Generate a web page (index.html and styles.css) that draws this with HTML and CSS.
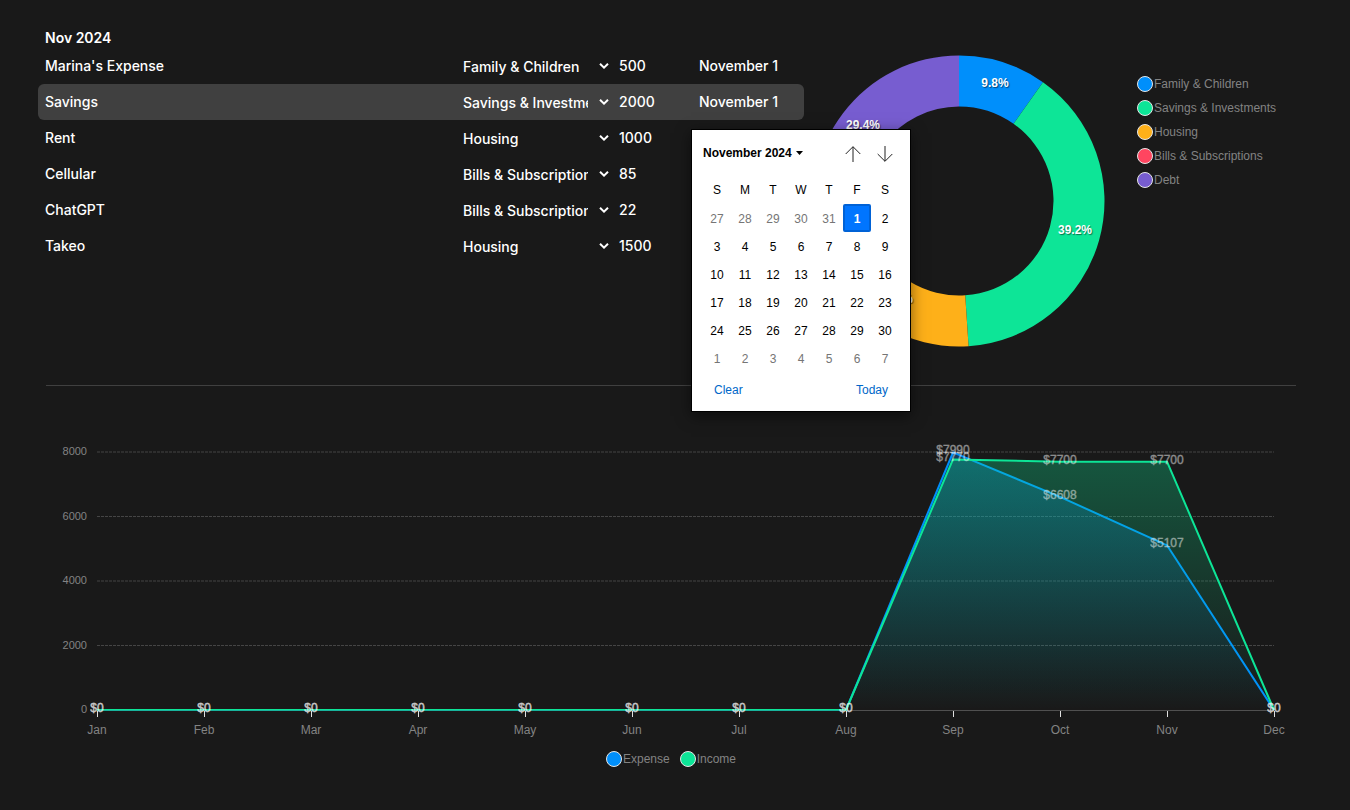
FILE: index.html
```html
<!DOCTYPE html>
<html lang="en">
<head>
<meta charset="utf-8">
<meta name="viewport" content="width=device-width, initial-scale=1">
<title>Expenses</title>
<link rel="stylesheet" href="styles.css">
</head>
<body>
<main class="page">
  <section class="overview">
    <div class="expenses">
      <h2 class="month">Nov 2024</h2>
      <table class="expense-table">
        <colgroup><col><col class="col-category"><col class="col-amount"><col class="col-date"></colgroup>
        <tbody id="rows"></tbody>
      </table>
    </div>

    <div class="breakdown">
      <svg class="donut" viewBox="-146 -146 292 292" role="img" aria-label="Expenses by category" id="donut"></svg>
      <ul class="legend legend-column">
        <li><span class="dot blue"></span>Family &amp; Children</li>
        <li><span class="dot green"></span>Savings &amp; Investments</li>
        <li><span class="dot orange"></span>Housing</li>
        <li><span class="dot red"></span>Bills &amp; Subscriptions</li>
        <li><span class="dot purple"></span>Debt</li>
      </ul>
    </div>
  </section>

  <hr class="divider">

  <section class="trend">
    <svg class="trend-chart" viewBox="0 0 1250 308" role="img" aria-label="Expense and income by month" id="trend"></svg>
    <ul class="legend legend-row">
      <li><span class="dot blue"></span>Expense</li>
      <li><span class="dot green"></span>Income</li>
    </ul>
  </section>
</main>

<template id="calendar-template">
  <div class="calendar" role="dialog" aria-label="Choose date">
    <div class="calendar-head">
      <button class="calendar-title" type="button">November 2024
        <svg width="7" height="4" viewBox="0 0 7 4" aria-hidden="true"><path d="M0 0h7L3.5 4z"/></svg>
      </button>
      <div class="calendar-nav">
        <button type="button" aria-label="Previous month"><svg width="16" height="16" viewBox="0 0 16 16"><path d="M8 16V.8M.7 8 8 .7 15.3 8"/></svg></button>
        <button type="button" aria-label="Next month"><svg width="16" height="16" viewBox="0 0 16 16"><path d="M8 0v15.2M.7 8 8 15.3 15.3 8"/></svg></button>
      </div>
    </div>
    <table class="calendar-grid">
      <thead><tr><th>S</th><th>M</th><th>T</th><th>W</th><th>T</th><th>F</th><th>S</th></tr></thead>
      <tbody></tbody>
    </table>
    <div class="calendar-foot">
      <button type="button">Clear</button>
      <button type="button">Today</button>
    </div>
  </div>
</template>
<script src="app.js"></script>
</body>
</html>
```

FILE: styles.css
```css
* { box-sizing: border-box; }

body {
  margin: 0;
  background: #191919;
  color: #fff;
  font-family: Inter, "Liberation Sans", sans-serif;
  font-size: 14px;
}

button, input, select {
  margin: 0;
  padding: 0;
  border: 0;
  border-radius: 0;
  background: none;
  color: inherit;
  font: inherit;
}

button { cursor: pointer; }

.page { padding: 28px 46px 40px 38px; }

.overview {
  display: flex;
  align-items: flex-start;
  gap: 9px;
  padding-bottom: 38px;
}

.expenses { flex: 1; min-width: 0; }

.month {
  margin: 0;
  padding-left: 7px;
  font-size: 14px;
  font-weight: 600;
  line-height: 20px;
}

.expense-table {
  width: 100%;
  table-layout: fixed;
  border-spacing: 0;
  font-weight: 500;
}

.col-category { width: 156px; }
.col-amount { width: 80px; }
.col-date { width: 113px; }

.expense-table > tbody > tr > td { height: 36px; padding: 0 0 0 8px; }
.expense-table > tbody > tr > td:first-child { padding-left: 7px; border-radius: 6px 0 0 6px; }
.expense-table > tbody > tr > td:last-child { border-radius: 0 6px 6px 0; position: relative; }
.expense-table > tbody > tr.active > td { background: #404040; }

.field {
  display: block;
  width: 100%;
  height: 36px;
  padding-bottom: 2px;
  outline: none;
}

.picker { display: grid; align-items: center; }
.picker > * { grid-area: 1 / 1; }
.picker select {
  appearance: none;
  width: 100%;
  height: 36px;
  padding-right: 23px;
  outline: none;
}
.picker svg {
  justify-self: end;
  margin-right: 2px;
  fill: none;
  stroke: #fff;
  stroke-width: 2;
  pointer-events: none;
}

.breakdown {
  display: flex;
  flex: 0 0 491px;
  align-items: flex-start;
  gap: 32px;
  padding-top: 27px;
}

.donut { flex: 0 0 292px; height: 292px; }
.donut text {
  fill: #fff;
  font: bold 12px "Liberation Sans", sans-serif;
  text-anchor: middle;
  text-shadow: 1px 1px 1px rgba(0, 0, 0, .5);
}

.legend {
  display: flex;
  margin: 0;
  padding: 0;
  list-style: none;
  color: #838383;
  font: 12px/24px "Liberation Sans", sans-serif;
}
.legend li { display: flex; align-items: center; gap: 1px; white-space: nowrap; }
.legend-column { flex-direction: column; padding-top: 17px; }
.legend-row { justify-content: center; gap: 10px; padding-top: 7px; }

.dot {
  width: 16px;
  height: 16px;
  border: 1px solid #e6e6e6;
  border-radius: 50%;
}
.blue { background: #008ffb; }
.green { background: #0de597; }
.orange { background: #feb019; }
.red { background: #ff4560; }
.purple { background: #775dd0; }

.divider {
  height: 1px;
  margin: 0 8px;
  border: 0;
  background: #404040;
}

.trend { padding: 46px 8px 0; }
.trend-chart { display: block; width: 100%; overflow: visible; }
.trend-chart text { font: 12px "Liberation Sans", sans-serif; text-anchor: middle; }
.trend-chart .month-label { fill: #838383; }
.trend-chart .value-label { fill: #838383; font-size: 11px; text-anchor: end; }
.trend-chart .data-label { fill: #fff; stroke: #fff; stroke-width: .3px; opacity: .5; }
.grid-line { stroke: #454545; stroke-dasharray: 3 1; }
.axis { stroke: #505050; }
.tick { stroke: #e0e0e0; }
.line { fill: none; stroke-width: 2; stroke-linejoin: round; }
.line-expense { stroke: #008ffb; }
.line-income { stroke: #0de597; }
.line-flat { stroke: #18b29c; }

.calendar {
  position: absolute;
  z-index: 10;
  top: 45px;
  left: 0;
  width: 220px;
  padding: 7px 11px 6px;
  border: 1px solid #000;
  background: #fff;
  color: #000;
  font: 12px "Liberation Sans", sans-serif;
  box-shadow: 0 4px 14px rgba(0, 0, 0, .5);
}

.calendar-head { display: flex; align-items: center; justify-content: space-between; height: 32px; margin-bottom: 7px; }
.calendar-title { display: flex; align-items: center; gap: 4px; font-weight: bold; white-space: nowrap; }
.calendar-nav { display: flex; gap: 16px; padding: 1px 6px 0 0; }
.calendar-nav button { display: flex; }
.calendar-nav svg { fill: none; stroke: #222; stroke-width: 1; }

.calendar-grid { width: 100%; table-layout: fixed; border-spacing: 0; }
.calendar-grid th, .calendar-grid td { height: 28px; padding: 0; text-align: center; font-weight: normal; }
.calendar-grid button { display: block; width: 28px; height: 28px; padding-top: 2px; }
.calendar-grid .outside { color: #757575; }
.calendar-grid .selected {
  padding: 1px 0 0;
  border: 2px solid #0062d6;
  border-radius: 2px;
  background: #0075ff;
  color: #fff;
  font-weight: bold;
}

.calendar-foot { display: flex; justify-content: space-between; padding: 4px 11px 1px; }
.calendar-foot button { height: 28px; color: #0067c9; }
```

FILE: app.js
```js
const expenses = [
  ["Marina's Expense", "Family & Children", 500],
  ["Savings", "Savings & Investments", 2000],
  ["Rent", "Housing", 1000],
  ["Cellular", "Bills & Subscriptions", 85],
  ["ChatGPT", "Bills & Subscriptions", 22],
  ["Takeo", "Housing", 1500]
];
const categories = ["Family & Children", "Savings & Investments", "Housing", "Bills & Subscriptions", "Debt"];
const esc = s => s.replace(/&/g, "&amp;").replace(/'/g, "&#39;");

document.getElementById("rows").innerHTML = expenses.map(([name, category, amount], i) => `
  <tr class="${i === 1 ? "active" : ""}">
    <td><input class="field" type="text" aria-label="Name" value="${esc(name)}"></td>
    <td><div class="picker">
      <select aria-label="Category">${categories.map(c => `<option${c === category ? " selected" : ""}>${esc(c)}</option>`).join("")}</select>
      <svg width="10" height="6" viewBox="0 0 10 6" aria-hidden="true"><path d="M1 .8 5 4.6 9 .8"/></svg>
    </div></td>
    <td><input class="field" type="text" inputmode="numeric" aria-label="Amount" value="${amount}"></td>
    <td>${i < 2 ? `<input class="field" type="text" aria-label="Date" value="November 1">` : ""}</td>
  </tr>`).join("");

// Date picker, opened from the active row
const calendar = document.getElementById("calendar-template").content.cloneNode(true);
const first = new Date(2024, 9, 27);
let weeks = "";
for (let w = 0; w < 6; w++) {
  weeks += "<tr>";
  for (let d = 0; d < 7; d++) {
    const day = new Date(first.getFullYear(), first.getMonth(), first.getDate() + w * 7 + d);
    const inside = day.getMonth() === 10;
    const state = !inside ? "outside" : day.getDate() === 1 ? "selected" : "";
    weeks += `<td><button type="button" class="${state}">${day.getDate()}</button></td>`;
  }
  weeks += "</tr>";
}
calendar.querySelector("tbody").innerHTML = weeks;
document.querySelector(".active td:last-child").append(calendar);

// Donut
const slices = [[500, "#008ffb"], [2000, "#0de597"], [1000, "#feb019"], [107, "#ff4560"], [1500, "#775dd0"]];
const total = slices.reduce((sum, s) => sum + s[0], 0);
const point = (r, a) => `${(r * Math.sin(a)).toFixed(2)} ${(-r * Math.cos(a)).toFixed(2)}`;
let angle = 0, arcs = "", labels = "";
for (const [value, color] of slices) {
  const end = angle + value / total * 2 * Math.PI;
  arcs += `<path fill="${color}" d="M${point(145.5, angle)}A145.5 145.5 0 0 1 ${point(145.5, end)}L${point(94.5, end)}A94.5 94.5 0 0 0 ${point(94.5, angle)}Z"/>`;
  const mid = (angle + end) / 2;
  if (value / total > .05) {
    labels += `<text x="${Math.round(120 * Math.sin(mid))}" y="${Math.round(-120 * Math.cos(mid))}">${(value / total * 100).toFixed(1)}%</text>`;
  }
  angle = end;
}
document.getElementById("donut").innerHTML = arcs + labels;

// Monthly trend
const months = ["Jan", "Feb", "Mar", "Apr", "May", "Jun", "Jul", "Aug", "Sep", "Oct", "Nov", "Dec"];
const expense = [0, 0, 0, 0, 0, 0, 0, 0, 7990, 6608, 5107, 0];
const income = [0, 0, 0, 0, 0, 0, 0, 0, 7770, 7700, 7700, 0];
const x = i => 51 + i * 107;
const y = v => 278 - v / 8000 * 258;
const path = data => "M" + data.map((v, i) => `${x(i)} ${y(v).toFixed(1)}`).join("L");
const gradient = (id, color) => `<linearGradient id="${id}" x1="0" y1="0" x2="0" y2="1"><stop stop-color="${color}" stop-opacity=".3"/><stop offset="1" stop-color="${color}" stop-opacity="0"/></linearGradient>`;
let svg = `<defs>${gradient("fill-expense", "#008ffb")}${gradient("fill-income", "#0de597")}</defs>`;
for (const v of [0, 2000, 4000, 6000, 8000]) {
  if (v) svg += `<line class="grid-line" x1="51" x2="1228" y1="${y(v)}" y2="${y(v)}"/>`;
  svg += `<text class="value-label" x="41" y="${Math.round(y(v) + 3)}">${v}</text>`;
}
svg += `<line class="axis" x1="51" x2="1228" y1="278.5" y2="278.5"/>`;
for (const [id, data] of [["expense", expense], ["income", income]]) {
  svg += `<path fill="url(#fill-${id})" d="${path(data)}Z"/><path class="line line-${id}" d="${path(data)}"/>`;
}
// Both series lie on the baseline until August
svg += `<line class="line-flat" x1="51" x2="800" y1="278.5" y2="278.5"/>`;
months.forEach((m, i) => {
  svg += `<line class="tick" x1="${x(i) + .5}" x2="${x(i) + .5}" y1="279" y2="285"/><text class="month-label" x="${x(i)}" y="302">${m}</text>`;
});
for (const data of [expense, income]) {
  data.forEach((v, i) => { svg += `<text class="data-label" x="${x(i)}" y="${Math.round(y(v) + 2)}">$${v}</text>`; });
}
document.getElementById("trend").innerHTML = svg;
```
